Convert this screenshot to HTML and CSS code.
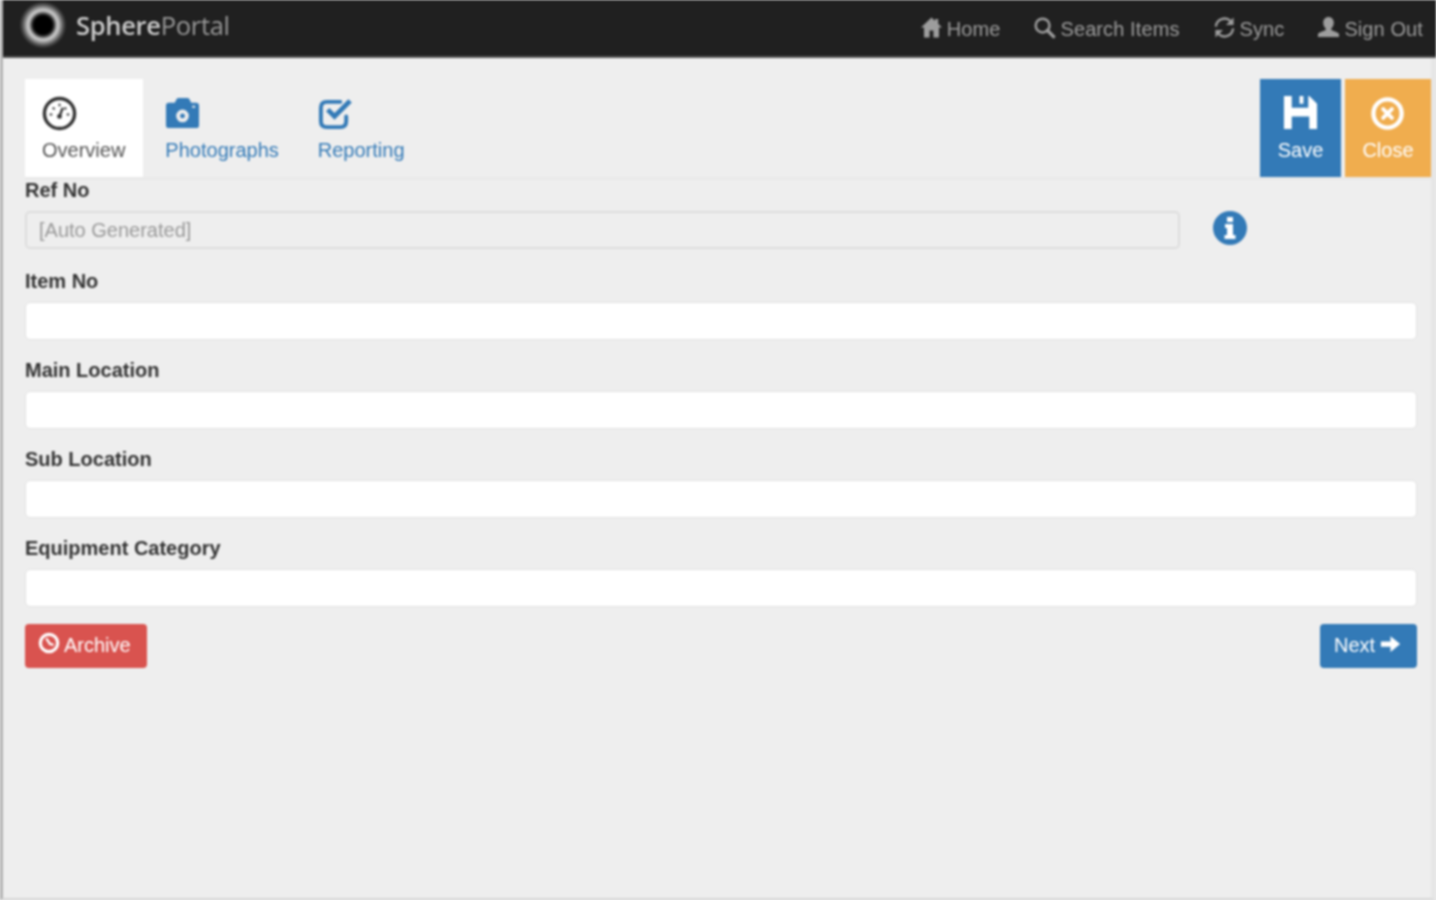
FILE: index.html
```html
<!DOCTYPE html>
<html lang="en">
<head>
<meta charset="utf-8">
<title>SpherePortal</title>
<link rel="stylesheet" href="styles.css">
</head>
<body>
<div class="app">
  <header class="topbar">
    <div class="brand">
      <span class="logo"></span>
      <span class="brand-name"><span class="brand-a">Sphere</span><span class="brand-b">Portal</span></span>
    </div>
    <nav class="topnav">
      <a class="navlink">
        <svg class="navicon" viewBox="0 0 24 24"><path d="M12 1.500 1 12h3.200v10.500h5.800V15h4v7.500h5.800V12H23l-4-3.800V3h-3.200v2.200z"/></svg>Home</a>
      <a class="navlink">
        <svg class="navicon" viewBox="0 0 24 24"><circle cx="10" cy="10" r="7.200" fill="none" stroke-width="2.600" class="st"/><path d="m15 15 6.500 6.500" fill="none" stroke-width="3.600" stroke-linecap="round" class="st"/></svg>Search Items</a>
      <a class="navlink">
        <svg class="navicon" viewBox="0 0 24 24"><path class="st" fill="none" stroke-width="2.400" d="M3 11a9 9 0 0 1 15.500-5.500M21 13a9 9 0 0 1-15.500 5.500"/><path d="M21.500 1.500v8h-8zM2.500 22.500v-8h8z"/></svg>Sync</a>
      <a class="navlink">
        <svg class="navicon" viewBox="0 0 24 24"><path d="M12 1c3.500 0 5.500 2.600 5.500 6 0 2.400-1 4.500-2.500 5.800v2c3 1 7.500 2.200 8 4.200v3H1v-3c.5-2 5-3.200 8-4.200v-2C7.500 11.500 6.500 9.400 6.500 7c0-3.400 2-6 5.500-6z"/></svg>Sign Out</a>
    </nav>
  </header>

  <main class="content">
    <div class="toolbar">
      <div class="tabs">
        <a class="tab tab-active">
          <svg class="tabicon" viewBox="0 0 36 36"><circle cx="18" cy="18" r="15.500" fill="#fff" stroke="#333" stroke-width="3.500"/><path d="M18 21l3-8" stroke="#333" stroke-width="2.500" stroke-linecap="round"/><circle cx="18" cy="21" r="2.500" fill="#333"/><path d="M8 19h2.500M11 12l2 1.500M18 8v2.500M25 12l-2 1.500M28 19h-2.500" stroke="#333" stroke-width="2"/></svg>
          <span>Overview</span>
        </a>
        <a class="tab">
          <svg class="tabicon" viewBox="0 0 36 36"><path fill="#337ab7" fill-rule="evenodd" d="M4 7h6l2-4q.5-1 2-1h9q1.500 0 2 1l2 4h5q3 0 3 3v20q0 3-3 3H4q-3 0-3-3V10q0-3 3-3zm14 7a6.500 6.500 0 1 0 0 13 6.500 6.500 0 0 0 0-13zm0 4a2.500 2.500 0 1 1 0 5 2.500 2.500 0 0 1 0-5zM28 10v2h3v-2z"/></svg>
          <span>Photographs</span>
        </a>
        <a class="tab">
          <svg class="tabicon" viewBox="0 0 36 36"><path fill="none" stroke="#337ab7" stroke-width="4" stroke-linecap="round" d="M29 21v5q0 6-6 6H9q-6 0-6-6V12q0-6 6-6h14"/><path fill="none" stroke="#337ab7" stroke-width="5" d="m10 14 7 7L33 5"/></svg>
          <span>Reporting</span>
        </a>
      </div>
      <div class="actions">
        <a class="action action-save">
          <svg class="tabicon" viewBox="0 0 36 36"><path fill="#fff" fill-rule="evenodd" d="M1 0h26l8 8v26H1zm8 0v12h17V0h-5v8h-4V0zM9 21v13h18V21z"/></svg>
          <span>Save</span>
        </a>
        <a class="action action-close">
          <svg class="tabicon" viewBox="0 0 36 36"><circle cx="17" cy="18" r="14.500" fill="none" stroke="#fff" stroke-width="4.500"/><path d="m12.500 13.500 9 9M21.500 13.500l-9 9" stroke="#fff" stroke-width="4" stroke-linecap="round"/></svg>
          <span>Close</span>
        </a>
      </div>
    </div>

    <form class="form">
      <div class="field">
        <label class="label">Ref No</label>
        <div class="input-row">
          <input class="input input-disabled" value="[Auto Generated]" disabled>
          <span class="info">
            <svg viewBox="0 0 34 34" class="info-icon"><circle cx="17" cy="17" r="17" fill="#337ab7"/><path fill="#fff" d="M14 6h6v5h-6zM12 13h8v11h2.500v4h-11v-4H14v-7h-2z"/></svg>
          </span>
        </div>
      </div>
      <div class="field"><label class="label">Item No</label><input class="input"></div>
      <div class="field"><label class="label">Main Location</label><input class="input"></div>
      <div class="field"><label class="label">Sub Location</label><input class="input"></div>
      <div class="field"><label class="label">Equipment Category</label><input class="input"></div>
      <div class="form-actions">
        <button type="button" class="btn btn-danger">
          <svg class="btn-icon" viewBox="0 0 24 24"><circle cx="12" cy="12" r="9.500" fill="none" stroke="#fff" stroke-width="3.500"/><path d="M9 7l4 6 4 1" fill="none" stroke="#fff" stroke-width="2.500"/></svg>Archive</button>
        <button type="button" class="btn btn-primary">Next
          <svg class="btn-arrow" viewBox="0 0 24 20"><path fill="#fff" d="M1 7h11V1l11 9-11 9v-6H1z"/></svg></button>
      </div>
    </form>
  </main>
</div>
</body>
</html>
```
FILE: styles.css
```css
* { box-sizing: border-box; }
html, body { margin: 0; height: 100%; }
body {
  background: #eee;
  font-family: "Liberation Sans", Arial, sans-serif;
  color: #333;
  overflow: hidden;
}
.app {
  height: 900px;
  display: flex;
  flex-direction: column;
  background: #eee;
  border-left: 3px solid #b4b4b4;
  border-right: 5px solid #e6e6e6;
  border-bottom: 2px solid #d6d6d6;
  filter: blur(0.8px);
}
.topbar {
  height: 58px;
  flex: none;
  background: #202020;
  border-bottom: 2px solid #555;
  display: flex;
  justify-content: space-between;
  align-items: center;
  margin-right: -5px;
  padding-right: 13px;
}
.brand { display: flex; align-items: center; gap: 10px; padding-left: 17px; margin-top: -7px; }
.logo {
  width: 46px;
  height: 46px;
  border-radius: 50%;
  background: radial-gradient(circle, #000 0 9px, #333 11px, #aaa 13.500px, #ccc 15px, #888 18px, #444 21px, #202020 24px);
}
.brand-name { font-family: "Open Sans", sans-serif; font-size: 25.500px; letter-spacing: -0.3px; }
.brand-a { color: #ccc; font-weight: 600; }
.brand-b { color: #999; font-weight: 400; }
.topnav { display: flex; gap: 33px; margin-top: 2px; }
.navlink {
  display: flex;
  align-items: center;
  gap: 4px;
  font-size: 20px;
  letter-spacing: 0.1px;
  color: #9d9d9d;
}
.navicon { width: 23px; height: 23px; fill: #9d9d9d; margin-top: -3px; }
.navicon .st { fill: none; stroke: #9d9d9d; }
.content { padding: 21px 0 0 22px; flex: 1; }
.toolbar {
  display: flex;
  justify-content: space-between;
  height: 98px;
  box-shadow: 0 3px 0 #e9e9e9;
}
.tabs { display: flex; }
.tab {
  display: flex;
  flex-direction: column;
  align-items: flex-start;
  gap: 8px;
  padding: 17px 22px 0 17px;
  font-size: 20px;
  color: #337ab7;
}
.tab-active { background: #fff; color: #555; padding-right: 18px; }
.tab + .tab { padding-left: 22px; padding-right: 17px; }
.tabicon { width: 35px; height: 35px; flex: none; }
.actions { display: flex; gap: 4px; }
.action {
  display: flex;
  flex-direction: column;
  align-items: center;
  gap: 8px;
  padding-top: 17px;
  font-size: 20px;
  color: #fff;
}
.action-save { width: 81px; background: #337ab7; }
.action-close { width: 86px; background: #f0ad4e; }
.form { padding-right: 14px; }
.field { display: flex; flex-direction: column; margin-bottom: 17px; }
.label { font-size: 20px; font-weight: 700; line-height: 24px; margin: 1px 0 9px; color: #333; }
.input {
  height: 38px;
  width: 100%;
  padding: 0 13px;
  border: 1px solid #e2e2e2;
  border-radius: 5px;
  background: #fff;
  font: 20px "Liberation Sans", Arial, sans-serif;
}
.input-row { display: flex; align-items: center; margin-bottom: 2px; }
.input-disabled {
  width: 1155px;
  background: #eee;
  border: 2px solid #ddd;
  padding: 0 12px;
  color: #999;
}
.info { margin-left: 33px; display: flex; margin-top: -4px; }
.info-icon { width: 34px; height: 34px; }
.form-actions { display: flex; justify-content: space-between; }
.btn {
  height: 44px;
  display: flex;
  align-items: center;
  border: 0;
  border-radius: 4px;
  color: #fff;
  font: 20px "Liberation Sans", Arial, sans-serif;
}
.btn-danger { width: 122px; background: #d9534f; padding: 0 0 2px 13px; gap: 4px; }
.btn-primary { width: 97px; background: #337ab7; padding: 0 0 2px 14px; gap: 5px; }
.btn-icon { width: 22px; height: 22px; margin-top: -4px; }
.btn-arrow { width: 21px; height: 18px; margin-top: -3px; }
```
